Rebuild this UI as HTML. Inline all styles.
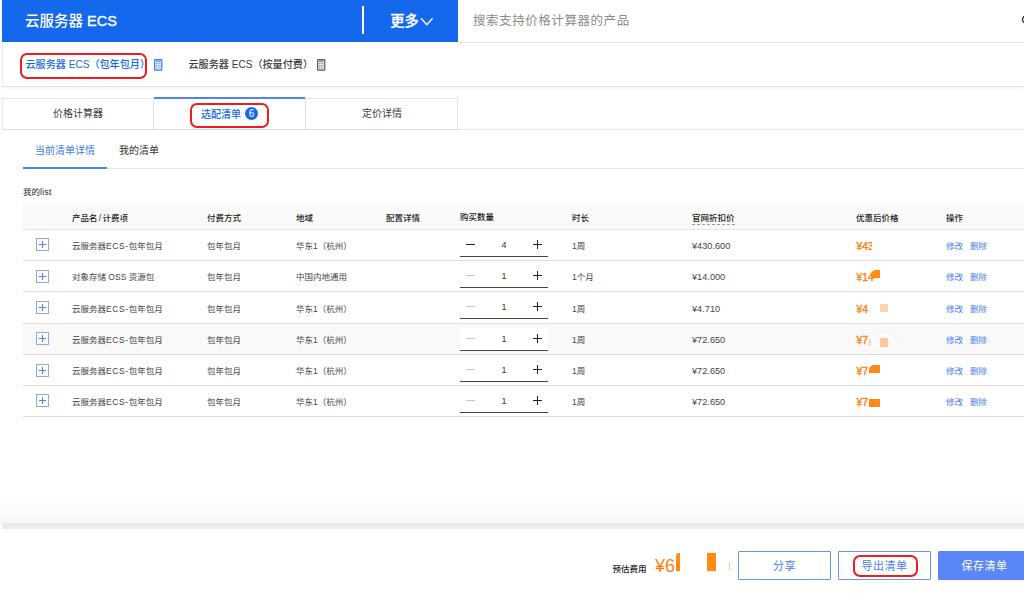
<!DOCTYPE html>
<html lang="zh-CN">
<head>
<meta charset="utf-8">
<title>价格计算器</title>
<style>
*{box-sizing:border-box;margin:0;padding:0}
html,body{width:1024px;height:593px;overflow:hidden;background:#fff}
body{font-family:"Liberation Sans","Noto Sans CJK SC",sans-serif;color:#333;position:relative;-webkit-text-size-adjust:none}
.abs{position:absolute;white-space:nowrap}
/* header */
#hdr{left:1.6px;top:0;width:456.4px;height:42px;background:#1468eb}
#hdr .ttl{left:23.4px;top:.5px;line-height:41px;font-size:14.5px;font-weight:500;color:#fff;letter-spacing:0}
#hdr .div{left:360px;top:6px;width:2px;height:28px;background:#fff}
#hdr .more{left:388.6px;top:1px;line-height:41px;font-size:14.3px;font-weight:500;color:#fff;-webkit-text-stroke:.3px #fff}
#search{left:458px;top:0;width:566px;height:43px;border-bottom:1px solid #e6e6e6}
#search .ph{left:15px;top:1px;line-height:41px;font-size:12.5px;color:#8a8a8a;letter-spacing:.56px}
/* product row */
#prod{left:2px;top:42px;width:1022px;height:45px;border-bottom:1px solid #e4e4e4;border-left:1px solid #ececec;box-shadow:0 1px 3px rgba(0,0,0,.06)}
.p1{left:25.5px;top:55px;line-height:20px;font-size:10.1px;color:#1468eb;font-weight:500}
.p2{left:188.5px;top:55px;line-height:20px;font-size:10.1px;color:#3a3a3a;font-weight:500}
.redbox{border:2px solid #ee1c22;border-radius:7px}
/* tabs */
#tabs{left:2px;top:98px;width:456px;height:32px;border:1px solid #e4e4e4;border-bottom:1px solid #dcdcdc}
.tab{top:98px;height:32px;line-height:31px;text-align:center;font-size:10px;color:#3a3a3a;font-weight:400}
#line130{left:2px;top:129px;width:1022px;height:1px;background:#e3e3e3}
/* sub tabs */
.st{top:140.5px;line-height:20px;font-size:10px;font-weight:400}
#line168{left:23px;top:168px;width:1001px;height:1px;background:#e6e6e6}
#uline{left:23px;top:167px;width:84px;height:2px;background:#4a86f2}
.lbl{left:23px;top:184px;line-height:16px;font-size:8.5px;color:#222;font-weight:400}
/* table */
#thead{left:23px;top:204px;width:1001px;height:26px;background:#fafafa;border-bottom:1px solid #e6e6e6}
.th{top:210px;line-height:16px;font-size:8.5px;color:#1c1c1c;font-weight:500}
.row{left:23px;width:1001px;height:32px;border-bottom:1px solid #dedede}
.row.hov{background:#f9f9f9}
.td{line-height:16px;font-size:8.5px;color:#444}
.ls{letter-spacing:.6px}
.plus{width:13px;height:13px;border:1px solid #8aabf4;background:#fff}
.plus:before{content:"";position:absolute;left:2px;top:5px;width:7px;height:1px;background:#4a82ef}
.plus:after{content:"";position:absolute;left:5px;top:2px;width:1px;height:7px;background:#4a82ef}
.step{left:460px;width:88px;height:24px;border-bottom:1px solid #444}
.row.hov .step{background:#fff}
.lnk{color:#4a80ee}
.pr{font-size:9.2px}
.org{color:#ff7f0e;font-weight:400;font-size:10.3px;-webkit-text-stroke:.4px #ff7f0e}
/* footer */
#shadow{left:0;top:494px;width:1024px;height:30px;background:linear-gradient(to bottom,#fff,#fbfbfb 50%,#f8f8f8)}
#band{left:1.5px;top:523.4px;width:1023px;height:5.4px;background:linear-gradient(to bottom,#eaeaea,#ededed)}
#foot{left:0;top:529px;width:1024px;height:64px;background:#fff}
.btn{top:551px;height:29px;line-height:28px;text-align:center;font-size:11px;border:1px solid #6b94f2;color:#4a80ee;background:#fff;border-radius:1px;letter-spacing:.5px}
</style>
</head>
<body>
<!-- header -->
<div id="hdr" class="abs">
  <div class="abs ttl">云服务器 <span style="-webkit-text-stroke:.35px #fff">ECS</span></div>
  <div class="abs div"></div>
  <div class="abs more">更多</div>
  <svg class="abs" style="left:418.2px;top:16.7px" width="14" height="10" viewBox="0 0 14 10"><path d="M1 1.3 L6.8 7.8 L12.6 1.3" fill="none" stroke="#fff" stroke-width="1.3"/></svg>
</div>
<div id="search" class="abs">
  <div class="abs ph">搜索支持价格计算器的产品</div>
  <svg class="abs" style="left:562.4px;top:13.5px" width="12" height="12" viewBox="0 0 12 12"><circle cx="6" cy="5.5" r="3.5" fill="none" stroke="#222" stroke-width="1.3"/></svg>
</div>
<!-- product row -->
<div id="prod" class="abs"></div>
<div class="abs p1">云服务器 ECS（包年包月）</div>
<div class="abs redbox" style="left:20px;top:52.5px;width:127px;height:26.5px"></div>
<svg class="abs" style="left:153.9px;top:59.2px" width="9" height="12" viewBox="0 0 9 12"><rect x="0.6" y="0.6" width="7.2" height="10.6" rx="0.6" fill="#e3edfd" stroke="#3a7af0" stroke-width="1.2"/><path d="M2 2.2h4.4" stroke="#3a7af0" stroke-width=".9" fill="none"/><path d="M2 4.4h4.4M2 6.5h4.4M2 8.7h4.4" stroke="#3a7af0" stroke-width=".9" stroke-dasharray="1.1 .55" fill="none" opacity=".75"/></svg>
<div class="abs p2">云服务器 ECS（按量付费）</div>
<svg class="abs" style="left:317.4px;top:59.2px" width="9" height="12" viewBox="0 0 9 12"><rect x="0.6" y="0.6" width="7.2" height="10.6" rx="0.6" fill="#ececec" stroke="#5a5a5a" stroke-width="1.2"/><path d="M2 2.2h4.4" stroke="#5a5a5a" stroke-width=".9" fill="none"/><path d="M2 4.4h4.4M2 6.5h4.4M2 8.7h4.4" stroke="#5a5a5a" stroke-width=".9" stroke-dasharray="1.1 .55" fill="none" opacity=".75"/></svg>
<!-- tabs -->
<div id="line130" class="abs"></div>
<div id="tabs" class="abs"></div>
<div class="abs tab" style="left:2px;width:152px">价格计算器</div>
<div class="abs" style="left:153px;top:98px;width:153px;height:31px;border-left:1px solid #dedede;border-right:1px solid #dedede;background:#fff"></div>
<div class="abs" style="left:154px;top:97.3px;width:151px;height:1.7px;background:#4a85f0"></div>
<div class="abs tab" style="left:201px;width:auto;color:#1468eb;top:98.5px;font-weight:500">选配清单</div>
<div class="abs" style="left:245px;top:107px;width:13px;height:13px;line-height:13px;border-radius:7px;background:#1468eb;color:#fff;font-size:10px;text-align:center">6</div>
<div class="abs tab" style="left:306px;width:152px">定价详情</div>
<div class="abs redbox" style="left:190px;top:102.5px;width:78.5px;height:25.5px"></div>
<!-- sub tabs -->
<div class="abs st" style="left:35px;color:#3a7cf0">当前清单详情</div>
<div class="abs st" style="left:119px;color:#333">我的清单</div>
<div id="line168" class="abs"></div>
<div id="uline" class="abs"></div>
<div class="abs lbl">我的<span style="letter-spacing:.35px">list</span></div>
<!-- table head -->
<div id="thead" class="abs"></div>
<div class="abs th" style="left:72px">产品名<span style="padding:0 1.3px">/</span>计费项</div>
<div class="abs th" style="left:207px">付费方式</div>
<div class="abs th" style="left:296px">地域</div>
<div class="abs th" style="left:386px">配置详情</div>
<div class="abs th" style="left:460px;top:209px">购买数量</div>
<div class="abs th" style="left:572px">时长</div>
<div class="abs th" style="left:692px">官网折扣价</div>
<div class="abs" style="left:692px;top:224px;width:43px;height:0;border-top:1px dashed #999"></div>
<div class="abs th" style="left:856px">优惠后价格</div>
<div class="abs th" style="left:946px">操作</div>
<!-- rows inserted below -->
<div class="abs row" style="top:230px;height:31px"></div>
<div class="abs plus" style="left:36px;top:238px"></div>
<div class="abs td" style="left:72px;top:238px">云服务器<span class="ls">ECS-</span>包年包月</div>
<div class="abs td" style="left:207px;top:238px">包年包月</div>
<div class="abs td" style="left:296px;top:238px">华东1（杭州）</div>
<div class="abs step" style="top:233px;"><div class="abs" style="left:6px;top:11px;width:9px;height:1px;background:#222"></div><div class="abs td" style="left:34px;width:20px;text-align:center;top:4px;color:#333;font-size:9px">4</div><div class="abs" style="left:73px;top:11px;width:9px;height:1px;background:#222"></div><div class="abs" style="left:77px;top:7px;width:1px;height:9px;background:#222"></div></div>
<div class="abs td" style="left:572px;top:238px">1周</div>
<div class="abs td pr" style="left:692px;top:238px">¥430.600</div>
<div class="abs td org" style="left:856.5px;top:239px">¥43</div>
<div class="abs td lnk" style="left:946px;top:238px">修改</div>
<div class="abs td lnk" style="left:970px;top:238px">删除</div>
<div class="abs row" style="top:261px;height:31px"></div>
<div class="abs plus" style="left:36px;top:270px"></div>
<div class="abs td" style="left:72px;top:269px">对象存储 OSS 资源包</div>
<div class="abs td" style="left:207px;top:269px">包年包月</div>
<div class="abs td" style="left:296px;top:269px">中国内地通用</div>
<div class="abs step" style="top:264px;"><div class="abs" style="left:6px;top:11px;width:9px;height:1px;background:#c4c4c4"></div><div class="abs td" style="left:34px;width:20px;text-align:center;top:4px;color:#333;font-size:9px">1</div><div class="abs" style="left:73px;top:11px;width:9px;height:1px;background:#222"></div><div class="abs" style="left:77px;top:7px;width:1px;height:9px;background:#222"></div></div>
<div class="abs td" style="left:572px;top:269px">1个月</div>
<div class="abs td pr" style="left:692px;top:269px">¥14.000</div>
<div class="abs td org" style="left:856.5px;top:270px">¥14</div>
<div class="abs td lnk" style="left:946px;top:269px">修改</div>
<div class="abs td lnk" style="left:970px;top:269px">删除</div>
<div class="abs row" style="top:292px;height:32px"></div>
<div class="abs plus" style="left:36px;top:301px"></div>
<div class="abs td" style="left:72px;top:301px">云服务器<span class="ls">ECS-</span>包年包月</div>
<div class="abs td" style="left:207px;top:301px">包年包月</div>
<div class="abs td" style="left:296px;top:301px">华东1（杭州）</div>
<div class="abs step" style="top:295px;"><div class="abs" style="left:6px;top:11px;width:9px;height:1px;background:#c4c4c4"></div><div class="abs td" style="left:34px;width:20px;text-align:center;top:4px;color:#333;font-size:9px">1</div><div class="abs" style="left:73px;top:11px;width:9px;height:1px;background:#222"></div><div class="abs" style="left:77px;top:7px;width:1px;height:9px;background:#222"></div></div>
<div class="abs td" style="left:572px;top:301px">1周</div>
<div class="abs td pr" style="left:692px;top:301px">¥4.710</div>
<div class="abs td org" style="left:856.5px;top:302px">¥4</div>
<div class="abs td lnk" style="left:946px;top:301px">修改</div>
<div class="abs td lnk" style="left:970px;top:301px">删除</div>
<div class="abs row hov" style="top:324px;height:31px"></div>
<div class="abs plus" style="left:36px;top:332px"></div>
<div class="abs td" style="left:72px;top:332px">云服务器<span class="ls">ECS-</span>包年包月</div>
<div class="abs td" style="left:207px;top:332px">包年包月</div>
<div class="abs td" style="left:296px;top:332px">华东1（杭州）</div>
<div class="abs step" style="top:327px;background:#fff;"><div class="abs" style="left:6px;top:11px;width:9px;height:1px;background:#c4c4c4"></div><div class="abs td" style="left:34px;width:20px;text-align:center;top:4px;color:#333;font-size:9px">1</div><div class="abs" style="left:73px;top:11px;width:9px;height:1px;background:#222"></div><div class="abs" style="left:77px;top:7px;width:1px;height:9px;background:#222"></div></div>
<div class="abs td" style="left:572px;top:332px">1周</div>
<div class="abs td pr" style="left:692px;top:332px">¥72.650</div>
<div class="abs td org" style="left:856.5px;top:333px">¥7</div>
<div class="abs td lnk" style="left:946px;top:332px">修改</div>
<div class="abs td lnk" style="left:970px;top:332px">删除</div>
<div class="abs row" style="top:355px;height:31px"></div>
<div class="abs plus" style="left:36px;top:364px"></div>
<div class="abs td" style="left:72px;top:363px">云服务器<span class="ls">ECS-</span>包年包月</div>
<div class="abs td" style="left:207px;top:363px">包年包月</div>
<div class="abs td" style="left:296px;top:363px">华东1（杭州）</div>
<div class="abs step" style="top:358px;"><div class="abs" style="left:6px;top:11px;width:9px;height:1px;background:#c4c4c4"></div><div class="abs td" style="left:34px;width:20px;text-align:center;top:4px;color:#333;font-size:9px">1</div><div class="abs" style="left:73px;top:11px;width:9px;height:1px;background:#222"></div><div class="abs" style="left:77px;top:7px;width:1px;height:9px;background:#222"></div></div>
<div class="abs td" style="left:572px;top:363px">1周</div>
<div class="abs td pr" style="left:692px;top:363px">¥72.650</div>
<div class="abs td org" style="left:856.5px;top:364px">¥7</div>
<div class="abs td lnk" style="left:946px;top:363px">修改</div>
<div class="abs td lnk" style="left:970px;top:363px">删除</div>
<div class="abs row" style="top:386px;height:31px"></div>
<div class="abs plus" style="left:36px;top:394px"></div>
<div class="abs td" style="left:72px;top:394px">云服务器<span class="ls">ECS-</span>包年包月</div>
<div class="abs td" style="left:207px;top:394px">包年包月</div>
<div class="abs td" style="left:296px;top:394px">华东1（杭州）</div>
<div class="abs step" style="top:389px;"><div class="abs" style="left:6px;top:11px;width:9px;height:1px;background:#c4c4c4"></div><div class="abs td" style="left:34px;width:20px;text-align:center;top:4px;color:#333;font-size:9px">1</div><div class="abs" style="left:73px;top:11px;width:9px;height:1px;background:#222"></div><div class="abs" style="left:77px;top:7px;width:1px;height:9px;background:#222"></div></div>
<div class="abs td" style="left:572px;top:394px">1周</div>
<div class="abs td pr" style="left:692px;top:394px">¥72.650</div>
<div class="abs td org" style="left:856.5px;top:395px">¥7</div>
<div class="abs td lnk" style="left:946px;top:394px">修改</div>
<div class="abs td lnk" style="left:970px;top:394px">删除</div>
<div class="abs" style="left:872px;top:238px;width:30px;height:16px;background:#fff;border-radius:0"></div>
<div class="abs" style="left:871.3px;top:269.5px;width:8.3px;height:8.1px;background:#ff8a12;border-radius:5px 0 0 0"></div>
<div class="abs" style="left:880px;top:304.2px;width:8px;height:8.3px;background:#ffd5b0;border-radius:0"></div>
<div class="abs" style="left:869px;top:333.5px;width:29px;height:15px;background:#fbfbfb;border-radius:6px"></div>
<div class="abs" style="left:869.2px;top:338.5px;width:1.6px;height:7.5px;background:#ffd2a6;border-radius:1px 0 0 1px"></div>
<div class="abs" style="left:880px;top:338.4px;width:8px;height:8.4px;background:#ffc898;border-radius:0"></div>
<div class="abs" style="left:869px;top:365px;width:10.6px;height:8px;background:#ff8a12;border-radius:5px 0 0 0"></div>
<div class="abs" style="left:869px;top:398.5px;width:10.6px;height:8.6px;background:#ff8a12;border-radius:0"></div>
<!-- footer -->
<div id="shadow" class="abs"></div>
<div id="band" class="abs"></div>
<div id="foot" class="abs"></div>
<div class="abs" style="left:612.5px;top:560.5px;line-height:16px;font-size:8.5px;color:#222;font-weight:500">预估费用</div>
<div class="abs" style="left:655px;top:552px;line-height:28px;font-size:18px;color:#ff7f0e">¥6</div>
<div class="abs" style="left:675.8px;top:553px;width:4.7px;height:17.7px;background:#ff8a14;border-radius:3px 0 0 0"></div>
<div class="abs" style="left:707px;top:553px;width:8.5px;height:17.5px;background:#ff8a14"></div>
<div class="abs" style="left:728.8px;top:561.5px;width:1px;height:8.5px;background:#ffc080"></div>
<div class="abs btn" style="left:738px;width:93px">分享</div>
<div class="abs btn" style="left:838px;width:93px">导出清单</div>
<div class="abs redbox" style="left:853px;top:555px;width:65px;height:22px;border-radius:7px"></div>
<div class="abs btn" style="left:938px;width:93px;background:#5b86f5;border-color:#5b86f5;color:#fff">保存清单</div>
</body>
</html>
